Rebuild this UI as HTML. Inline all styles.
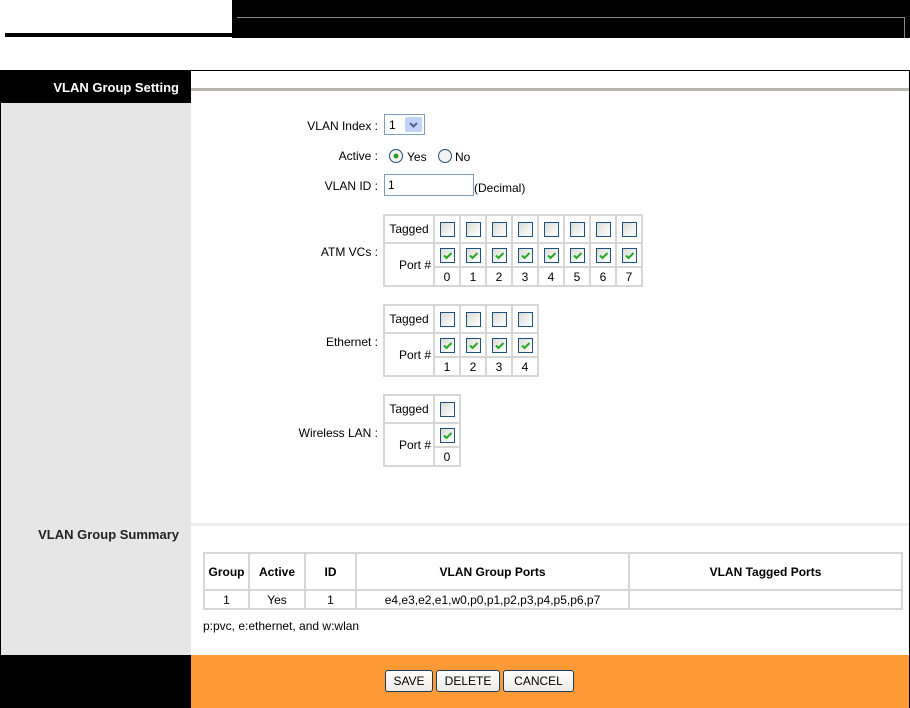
<!DOCTYPE html>
<html><head><meta charset="utf-8"><style>
*{margin:0;padding:0;box-sizing:border-box}
body{width:910px;height:708px;background:#fff;font-family:"Liberation Sans",Arial,sans-serif;font-size:12px;color:#000;position:relative;overflow:hidden}
.a{position:absolute}
.lbl{position:absolute;right:532px;white-space:nowrap}
table.g{position:absolute;border-collapse:separate;border-spacing:2px;background:#d6d6d6}
table.g td{background:#fff;text-align:center;vertical-align:middle;padding:0}
.cb{display:inline-block;width:15px;height:15px;border:1px solid #1c5180;background:linear-gradient(135deg,#dcdcd6,#fff);vertical-align:middle}
.cb svg{display:block}
table.s{position:absolute;border-collapse:separate;border-spacing:2px;background:#d6d6d6}
table.s td{background:#fff;text-align:center;padding:0}
.btn{position:absolute;top:670px;height:22px;border:1px solid #1c3a5a;border-radius:3px;background:linear-gradient(#fff,#ecebe6);font-size:12px;text-align:center;line-height:20px}
</style></head><body>
<div class="a" style="left:5px;top:33px;width:228px;height:4px;background:#000"></div>
<div class="a" style="left:232px;top:0;width:678px;height:38px;background:#000"></div>
<div class="a" style="left:237px;top:17px;width:668px;height:1px;background:#888"></div>
<div class="a" style="left:904px;top:17px;width:1px;height:21px;background:#888"></div>
<div class="a" style="left:0;top:70px;width:910px;height:638px;border:1px solid #000;border-bottom:none"></div>
<div class="a" style="left:1px;top:71px;width:190px;height:32px;background:#000"></div>
<div class="a" style="left:0;top:80px;width:179px;text-align:right;color:#fff;font-weight:bold;font-size:13px">VLAN Group Setting</div>
<div class="a" style="left:1px;top:103px;width:190px;height:552px;background:#e6e6e6"></div>
<div class="a" style="left:191px;top:88px;width:718px;height:3px;background:#b8b5aa"></div>
<div class="a" style="left:191px;top:523px;width:718px;height:3px;background:#ececec"></div>
<div class="a" style="left:0;top:527px;width:179px;text-align:right;font-weight:bold;color:#222;font-size:13px">VLAN Group Summary</div>
<div class="a" style="left:1px;top:655px;width:190px;height:53px;background:#000"></div>
<div class="a" style="left:191px;top:655px;width:718px;height:53px;background:#fe9a35"></div>
<div class="btn" style="left:385px;width:48px">SAVE</div>
<div class="btn" style="left:436px;width:64px">DELETE</div>
<div class="btn" style="left:503px;width:71px">CANCEL</div>
<div class="lbl" style="top:119px">VLAN Index :</div>
<div class="a" style="left:384px;top:114px;width:41px;height:21px;border:1px solid #7f9db9;background:#fff"><span class="a" style="left:4px;top:3px">1</span><div class="a" style="left:20px;top:2px;width:17px;height:15px;background:#c1d3fb;border-radius:2px"><svg width="17" height="15"><path d="M5 6l3.5 3.5L12 6" stroke="#4d6185" stroke-width="2" fill="none"/></svg></div></div>
<div class="lbl" style="top:149px">Active :</div>
<svg class="a" style="left:388px;top:148px" width="16" height="16"><circle cx="8" cy="8" r="6.5" fill="#f3f3ef" stroke="#1c5180"/><circle cx="8" cy="8" r="2.5" fill="#2aa02a"/></svg>
<span class="a" style="left:407px;top:150px">Yes</span>
<svg class="a" style="left:437px;top:148px" width="16" height="16"><circle cx="8" cy="8" r="6.5" fill="#f3f3ef" stroke="#1c5180"/></svg>
<span class="a" style="left:455px;top:150px">No</span>
<div class="lbl" style="top:179px">VLAN ID :</div>
<div class="a" style="left:384px;top:174px;width:90px;height:22px;border:1px solid #7f9db9;background:#fff"><span class="a" style="left:3px;top:3px">1</span></div>
<span class="a" style="left:474px;top:181px">(Decimal)</span>
<div class="lbl" style="top:245px">ATM VCs :</div>
<div class="lbl" style="top:335px">Ethernet :</div>
<div class="lbl" style="top:426px">Wireless LAN :</div>

<table class="g" style="left:383px;top:214px">
<tr style="height:26px"><td style="width:48px">Tagged</td>
<td style="width:24px"><span class="cb"></span></td><td style="width:24px"><span class="cb"></span></td><td style="width:24px"><span class="cb"></span></td><td style="width:24px"><span class="cb"></span></td><td style="width:24px"><span class="cb"></span></td><td style="width:24px"><span class="cb"></span></td><td style="width:24px"><span class="cb"></span></td><td style="width:24px"><span class="cb"></span></td></tr>
<tr style="height:22px"><td rowspan="2" style="text-align:right;padding-right:2px">Port #</td>
<td><span class="cb"><svg width="13" height="13"><path d="M3 6.5l2.5 2.5 5-5" stroke="#22aa22" stroke-width="2" fill="none"/></svg></span></td><td><span class="cb"><svg width="13" height="13"><path d="M3 6.5l2.5 2.5 5-5" stroke="#22aa22" stroke-width="2" fill="none"/></svg></span></td><td><span class="cb"><svg width="13" height="13"><path d="M3 6.5l2.5 2.5 5-5" stroke="#22aa22" stroke-width="2" fill="none"/></svg></span></td><td><span class="cb"><svg width="13" height="13"><path d="M3 6.5l2.5 2.5 5-5" stroke="#22aa22" stroke-width="2" fill="none"/></svg></span></td><td><span class="cb"><svg width="13" height="13"><path d="M3 6.5l2.5 2.5 5-5" stroke="#22aa22" stroke-width="2" fill="none"/></svg></span></td><td><span class="cb"><svg width="13" height="13"><path d="M3 6.5l2.5 2.5 5-5" stroke="#22aa22" stroke-width="2" fill="none"/></svg></span></td><td><span class="cb"><svg width="13" height="13"><path d="M3 6.5l2.5 2.5 5-5" stroke="#22aa22" stroke-width="2" fill="none"/></svg></span></td><td><span class="cb"><svg width="13" height="13"><path d="M3 6.5l2.5 2.5 5-5" stroke="#22aa22" stroke-width="2" fill="none"/></svg></span></td></tr>
<tr style="height:17px"><td>0</td><td>1</td><td>2</td><td>3</td><td>4</td><td>5</td><td>6</td><td>7</td></tr>
</table>

<table class="g" style="left:383px;top:304px">
<tr style="height:26px"><td style="width:48px">Tagged</td>
<td style="width:24px"><span class="cb"></span></td><td style="width:24px"><span class="cb"></span></td><td style="width:24px"><span class="cb"></span></td><td style="width:24px"><span class="cb"></span></td></tr>
<tr style="height:22px"><td rowspan="2" style="text-align:right;padding-right:2px">Port #</td>
<td><span class="cb"><svg width="13" height="13"><path d="M3 6.5l2.5 2.5 5-5" stroke="#22aa22" stroke-width="2" fill="none"/></svg></span></td><td><span class="cb"><svg width="13" height="13"><path d="M3 6.5l2.5 2.5 5-5" stroke="#22aa22" stroke-width="2" fill="none"/></svg></span></td><td><span class="cb"><svg width="13" height="13"><path d="M3 6.5l2.5 2.5 5-5" stroke="#22aa22" stroke-width="2" fill="none"/></svg></span></td><td><span class="cb"><svg width="13" height="13"><path d="M3 6.5l2.5 2.5 5-5" stroke="#22aa22" stroke-width="2" fill="none"/></svg></span></td></tr>
<tr style="height:17px"><td>1</td><td>2</td><td>3</td><td>4</td></tr>
</table>

<table class="g" style="left:383px;top:394px">
<tr style="height:26px"><td style="width:48px">Tagged</td><td style="width:24px"><span class="cb"></span></td></tr>
<tr style="height:22px"><td rowspan="2" style="text-align:right;padding-right:2px">Port #</td>
<td><span class="cb"><svg width="13" height="13"><path d="M3 6.5l2.5 2.5 5-5" stroke="#22aa22" stroke-width="2" fill="none"/></svg></span></td></tr>
<tr style="height:17px"><td>0</td></tr>
</table>

<table class="s" style="left:203px;top:552px;width:700px">
<tr style="height:35px;font-weight:bold"><td style="width:43px">Group</td><td style="width:54px">Active</td><td style="width:49px">ID</td><td style="width:271px">VLAN Group Ports</td><td>VLAN Tagged Ports</td></tr>
<tr style="height:17px"><td>1</td><td>Yes</td><td>1</td><td>e4,e3,e2,e1,w0,p0,p1,p2,p3,p4,p5,p6,p7</td><td></td></tr>
</table>
<span class="a" style="left:203px;top:619px">p:pvc, e:ethernet, and w:wlan</span>
</body></html>
